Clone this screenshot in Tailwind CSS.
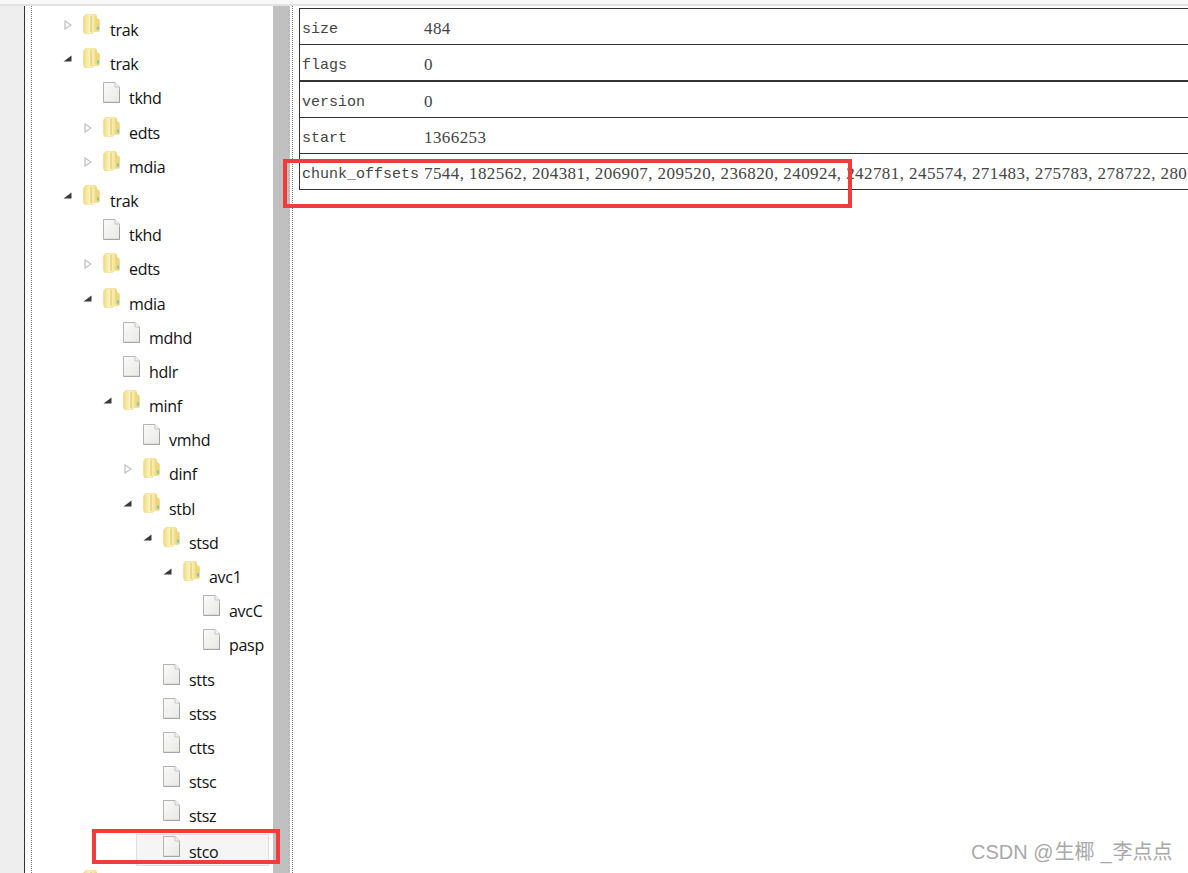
<!DOCTYPE html>
<html lang="zh-CN">
<head>
    <meta charset="UTF-8">
    <title>mp4 box viewer</title>
    <script src="https://cdn.jsdelivr.net/npm/@tailwindcss/browser@4"></script>
</head>
<body class="bg-white">
    <svg class="absolute w-0 h-0" xmlns="http://www.w3.org/2000/svg">
        <defs>
            <linearGradient id="fold" x1="0" y1="0" x2="1" y2="0">
                <stop offset="0" stop-color="#f0da80"/>
                <stop offset="0.4" stop-color="#fdf5c0"/>
                <stop offset="0.7" stop-color="#f6e496"/>
                <stop offset="1" stop-color="#eccf74"/>
            </linearGradient>
            <linearGradient id="page" x1="0" y1="0" x2="1" y2="1">
                <stop offset="0" stop-color="#fafafa"/>
                <stop offset="1" stop-color="#e8e8e4"/>
            </linearGradient>
        </defs>
        <symbol id="folder" viewBox="0 0 17 20">
            <path d="M2 1.500Q2 .5 3 .5H12Q13.500 .5 13.500 2V4L15.500 5Q16.500 5.500 16.500 7V16Q16.500 17.500 15 17.500H11L9.500 19.500Q9 20 8 20H4Q.5 20 .5 16.500V4Q.5 2 2 1.500Z" fill="url(#fold)" stroke="#ecd68a" stroke-width=".6"/>
            <path d="M8 1.500V18" stroke="#dcc064" stroke-width="1" fill="none"/>
            <path d="M13 2V16" stroke="#e5ca72" stroke-width=".8" fill="none"/>
            <rect x="14" y="12.500" width="2" height="3" fill="#7cc4c4"/>
        </symbol>
        <symbol id="file" viewBox="0 0 17 21">
            <path d="M.5 .5H12L16.500 5V20.500H.5Z" fill="url(#page)" stroke="#b4b4b4" stroke-width="1"/>
            <path d="M12 .5V5H16.500" fill="#f4f4f4" stroke="#c4c4c4" stroke-width="1"/>
            <path d="M1 20.300H16.500V8" fill="none" stroke="#9c9c9c" stroke-width=".8"/>
        </symbol>
        <symbol id="closed" viewBox="0 0 8 10">
            <path d="M1 1L7 5L1 9Z" fill="#fff" stroke="#c2c2c2" stroke-width="1.300"/>
        </symbol>
        <symbol id="open" viewBox="0 0 9 7">
            <path d="M8.500 .5V6.500H.5Z" fill="#3a3a3a"/>
        </symbol>
    </svg>

    <div class="relative w-[1188px] h-[873px] overflow-hidden bg-white">
        <div class="h-[6px] bg-[#f8f8f8] border-b-2 border-[#e2e2e2]"></div>
        <div class="flex h-[867px]">
            <div class="w-[24px] bg-[#eeeeee]"></div>
            <div class="w-[1px] bg-[#333333]"></div>
            <div class="w-[6px]"></div>
            <div class="w-[1px] border-l border-dotted border-[#777777]"></div>

            <!-- tree -->
            <div class="w-[241px] pt-[7px] overflow-hidden font-['Open_Sans','Noto_Sans',sans-serif] text-[16px] text-[#111111] tracking-[-0.3px]">
                <div class="flex h-[34.2px] pl-[32px]"><span class="w-[19px] pt-[7px]"><svg class="w-[8px] h-[10px]"><use href="#closed"/></svg></span><svg class="w-[17px] h-[20px] mt-[1px]"><use href="#folder"/></svg><span class="ml-[10px] leading-[34px]">trak</span></div>
                <div class="flex h-[34.2px] pl-[31px]"><span class="w-[20px] pt-[8px]"><svg class="w-[9px] h-[7px]"><use href="#open"/></svg></span><svg class="w-[17px] h-[20px] mt-[1px]"><use href="#folder"/></svg><span class="ml-[10px] leading-[34px]">trak</span></div>
                <div class="flex h-[34.2px] pl-[71px]"><svg class="w-[17px] h-[21px] mt-[1px]"><use href="#file"/></svg><span class="ml-[9px] leading-[34px]">tkhd</span></div>
                <div class="flex h-[34.2px] pl-[52px]"><span class="w-[19px] pt-[7px]"><svg class="w-[8px] h-[10px]"><use href="#closed"/></svg></span><svg class="w-[17px] h-[20px] mt-[1px]"><use href="#folder"/></svg><span class="ml-[9px] leading-[34px]">edts</span></div>
                <div class="flex h-[34.2px] pl-[52px]"><span class="w-[19px] pt-[7px]"><svg class="w-[8px] h-[10px]"><use href="#closed"/></svg></span><svg class="w-[17px] h-[20px] mt-[1px]"><use href="#folder"/></svg><span class="ml-[9px] leading-[34px]">mdia</span></div>
                <div class="flex h-[34.2px] pl-[31px]"><span class="w-[20px] pt-[8px]"><svg class="w-[9px] h-[7px]"><use href="#open"/></svg></span><svg class="w-[17px] h-[20px] mt-[1px]"><use href="#folder"/></svg><span class="ml-[10px] leading-[34px]">trak</span></div>
                <div class="flex h-[34.2px] pl-[71px]"><svg class="w-[17px] h-[21px] mt-[1px]"><use href="#file"/></svg><span class="ml-[9px] leading-[34px]">tkhd</span></div>
                <div class="flex h-[34.2px] pl-[52px]"><span class="w-[19px] pt-[7px]"><svg class="w-[8px] h-[10px]"><use href="#closed"/></svg></span><svg class="w-[17px] h-[20px] mt-[1px]"><use href="#folder"/></svg><span class="ml-[9px] leading-[34px]">edts</span></div>
                <div class="flex h-[34.2px] pl-[51px]"><span class="w-[20px] pt-[8px]"><svg class="w-[9px] h-[7px]"><use href="#open"/></svg></span><svg class="w-[17px] h-[20px] mt-[1px]"><use href="#folder"/></svg><span class="ml-[9px] leading-[34px]">mdia</span></div>
                <div class="flex h-[34.2px] pl-[91px]"><svg class="w-[17px] h-[21px] mt-[1px]"><use href="#file"/></svg><span class="ml-[9px] leading-[34px]">mdhd</span></div>
                <div class="flex h-[34.2px] pl-[91px]"><svg class="w-[17px] h-[21px] mt-[1px]"><use href="#file"/></svg><span class="ml-[9px] leading-[34px]">hdlr</span></div>
                <div class="flex h-[34.2px] pl-[71px]"><span class="w-[20px] pt-[8px]"><svg class="w-[9px] h-[7px]"><use href="#open"/></svg></span><svg class="w-[17px] h-[20px] mt-[1px]"><use href="#folder"/></svg><span class="ml-[9px] leading-[34px]">minf</span></div>
                <div class="flex h-[34.2px] pl-[111px]"><svg class="w-[17px] h-[21px] mt-[1px]"><use href="#file"/></svg><span class="ml-[9px] leading-[34px]">vmhd</span></div>
                <div class="flex h-[34.2px] pl-[92px]"><span class="w-[19px] pt-[7px]"><svg class="w-[8px] h-[10px]"><use href="#closed"/></svg></span><svg class="w-[17px] h-[20px] mt-[1px]"><use href="#folder"/></svg><span class="ml-[9px] leading-[34px]">dinf</span></div>
                <div class="flex h-[34.2px] pl-[91px]"><span class="w-[20px] pt-[8px]"><svg class="w-[9px] h-[7px]"><use href="#open"/></svg></span><svg class="w-[17px] h-[20px] mt-[1px]"><use href="#folder"/></svg><span class="ml-[9px] leading-[34px]">stbl</span></div>
                <div class="flex h-[34.2px] pl-[111px]"><span class="w-[20px] pt-[8px]"><svg class="w-[9px] h-[7px]"><use href="#open"/></svg></span><svg class="w-[17px] h-[20px] mt-[1px]"><use href="#folder"/></svg><span class="ml-[9px] leading-[34px]">stsd</span></div>
                <div class="flex h-[34.2px] pl-[131px]"><span class="w-[20px] pt-[8px]"><svg class="w-[9px] h-[7px]"><use href="#open"/></svg></span><svg class="w-[17px] h-[20px] mt-[1px]"><use href="#folder"/></svg><span class="ml-[9px] leading-[34px]">avc1</span></div>
                <div class="flex h-[34.2px] pl-[171px]"><svg class="w-[17px] h-[21px] mt-[1px]"><use href="#file"/></svg><span class="ml-[9px] leading-[34px]">avcC</span></div>
                <div class="flex h-[34.2px] pl-[171px]"><svg class="w-[17px] h-[21px] mt-[1px]"><use href="#file"/></svg><span class="ml-[9px] leading-[34px]">pasp</span></div>
                <div class="flex h-[34.2px] pl-[131px]"><svg class="w-[17px] h-[21px] mt-[1px]"><use href="#file"/></svg><span class="ml-[9px] leading-[34px]">stts</span></div>
                <div class="flex h-[34.2px] pl-[131px]"><svg class="w-[17px] h-[21px] mt-[1px]"><use href="#file"/></svg><span class="ml-[9px] leading-[34px]">stss</span></div>
                <div class="flex h-[34.2px] pl-[131px]"><svg class="w-[17px] h-[21px] mt-[1px]"><use href="#file"/></svg><span class="ml-[9px] leading-[34px]">ctts</span></div>
                <div class="flex h-[34.2px] pl-[131px]"><svg class="w-[17px] h-[21px] mt-[1px]"><use href="#file"/></svg><span class="ml-[9px] leading-[34px]">stsc</span></div>
                <div class="flex h-[34.2px] pl-[131px]"><svg class="w-[17px] h-[21px] mt-[1px]"><use href="#file"/></svg><span class="ml-[9px] leading-[34px]">stsz</span></div>
                <div class="flex h-[32px] mb-[2.2px] ml-[104px] pl-[26px] mr-[4px] bg-[#f5f5f5] border border-[#e0e0e0] box-border"><svg class="w-[17px] h-[21px] mt-[1px]"><use href="#file"/></svg><span class="ml-[9px] leading-[34px]">stco</span></div>
                <div class="flex h-[34.2px] pl-[51px] pt-[2px]"><svg class="w-[17px] h-[20px]"><use href="#folder"/></svg></div>
            </div>

            <div class="w-[17px] bg-[#c0c0c0]"></div>
            <div class="w-[2px]"></div>
            <div class="w-[1px] border-l border-dotted border-[#777777]"></div>
            <div class="w-[6px]"></div>

            <!-- properties table -->
            <div class="flex-1 min-w-0 pt-[2px]">
                <div class="border-t border-l border-[#333333] text-[#444444] font-['Liberation_Serif',serif] text-[17px] tracking-[0.42px]">
                    <div class="flex h-[36px] pt-[5px] items-center border-b border-[#333333] whitespace-nowrap overflow-hidden"><span class="w-[124px] pl-[2px] pt-[2px] shrink-0 text-[15px] tracking-normal font-['Liberation_Mono',monospace]">size</span><span>484</span></div>
                    <div class="flex h-[37px] pt-[5px] items-center border-b-2 border-[#333333] whitespace-nowrap overflow-hidden"><span class="w-[124px] pl-[2px] pt-[2px] shrink-0 text-[15px] tracking-normal font-['Liberation_Mono',monospace]">flags</span><span>0</span></div>
                    <div class="flex h-[36px] pt-[5px] items-center border-b border-[#333333] whitespace-nowrap overflow-hidden"><span class="w-[124px] pl-[2px] pt-[2px] shrink-0 text-[15px] tracking-normal font-['Liberation_Mono',monospace]">version</span><span>0</span></div>
                    <div class="flex h-[36px] pt-[5px] items-center border-b border-[#333333] whitespace-nowrap overflow-hidden"><span class="w-[124px] pl-[2px] pt-[2px] shrink-0 text-[15px] tracking-normal font-['Liberation_Mono',monospace]">start</span><span>1366253</span></div>
                    <div class="flex h-[36px] pt-[5px] items-center border-b border-[#333333] whitespace-nowrap overflow-hidden"><span class="w-[124px] pl-[2px] pt-[2px] shrink-0 text-[15px] tracking-normal font-['Liberation_Mono',monospace]">chunk_offsets</span><span>7544, 182562, 204381, 206907, 209520, 236820, 240924, 242781, 245574, 271483, 275783, 278722, 280</span></div>
                </div>
            </div>
        </div>

        <!-- red annotations -->
        <div class="absolute left-[283px] top-[159px] w-[569px] h-[49px] border-[4px] border-[#f23c3c]"></div>
        <div class="absolute left-[92px] top-[829px] w-[188px] h-[35px] border-[4px] border-[#f23c3c]"></div>

        <!-- watermark -->
        <div class="absolute left-[971px] top-[838px] text-[20px] leading-[28px] text-[#a8a8a8] whitespace-nowrap font-['Liberation_Sans','Noto_Sans_CJK_SC',sans-serif]">CSDN @<span class="ml-[1px]">生椰</span><span class="inline-block w-[17px] text-right">_</span><span class="ml-[1px]">李点点</span></div>
    </div>
</body>
</html>
